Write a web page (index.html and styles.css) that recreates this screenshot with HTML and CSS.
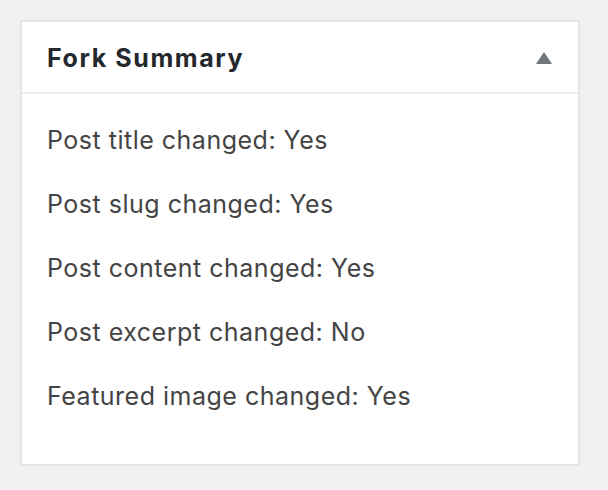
FILE: index.html
```html
<!DOCTYPE html>
<html>
<head>
<meta charset="utf-8">
<link rel="stylesheet" href="styles.css">
</head>
<body>
<div class="page">
  <div class="postbox">
    <div class="postbox-header">
      <h2 class="postbox-title">Fork Summary</h2>
      <span class="toggle-arrow"></span>
    </div>
    <div class="postbox-inside">
      <p class="summary-row">Post title changed: Yes</p>
      <p class="summary-row">Post slug changed: Yes</p>
      <p class="summary-row">Post content changed: Yes</p>
      <p class="summary-row">Post excerpt changed: No</p>
      <p class="summary-row">Featured image changed: Yes</p>
    </div>
  </div>
</div>
</body>
</html>
```
FILE: styles.css
```css
html, body {
  margin: 0;
  padding: 0;
  background: #f1f1f1;
}
.page {
  padding: 20px 28px 0 20px;
  font-family: Inter, "Noto Sans", "Liberation Sans", sans-serif;
}
.postbox {
  width: 556px;
  background: #fff;
  border: 2px solid #e5e5e5;
  box-shadow: 0 2px 2px rgba(0,0,0,0.04);
}
.postbox-header {
  display: flex;
  align-items: center;
  justify-content: space-between;
  height: 70px;
  padding: 0 26px 0 25px;
  border-bottom: 2px solid #eeeeee;
}
.postbox-title {
  margin: 0;
  padding-top: 2px;
  font-size: 25px;
  font-weight: 700;
  color: #23282d;
  letter-spacing: 1.6px;
}
.toggle-arrow {
  width: 0;
  height: 0;
  border-left: 8px solid transparent;
  border-right: 8px solid transparent;
  border-bottom: 12px solid #72777c;
  margin-top: 2px;
}
.postbox-inside {
  display: flex;
  flex-direction: column;
  padding: 28px 25px 22px;
}
.summary-row {
  margin: 0;
  height: 64px;
  line-height: 36px;
  font-size: 25px;
  color: #444;
  letter-spacing: 0.5px;
}
```
